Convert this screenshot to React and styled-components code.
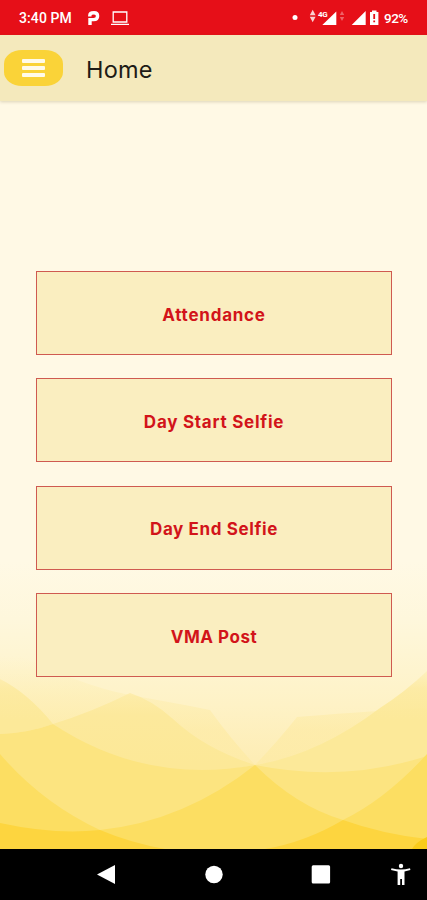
import React from "react";
import styled, { createGlobalStyle } from "styled-components";

const MENU = [
  { label: "Attendance", spacing: 0.76 },
  { label: "Day Start Selfie", spacing: 0.74 },
  { label: "Day End Selfie", spacing: 0.62 },
  { label: "VMA Post", spacing: 0.5 },
];

const Waves = () => (
  <WaveArt viewBox="0 0 427 288">
    <defs>
      <linearGradient id="haze" x1="0" y1="0" x2="0" y2="1">
        <stop offset="0" stopColor="#fff9e5" />
        <stop offset="0.2" stopColor="#fef7dc" />
        <stop offset="0.5" stopColor="#fef2c6" />
        <stop offset="0.72" stopColor="#fdecb2" />
      </linearGradient>
      <linearGradient id="pale" x1="0" y1="95" x2="0" y2="170" gradientUnits="userSpaceOnUse">
        <stop offset="0" stopColor="#fdefb4" stopOpacity="0" />
        <stop offset="0.5" stopColor="#fdedac" stopOpacity="0.7" />
        <stop offset="1" stopColor="#fdeaa2" />
      </linearGradient>
      <linearGradient id="mid" x1="0" y1="120" x2="0" y2="205" gradientUnits="userSpaceOnUse">
        <stop offset="0" stopColor="#fdeba4" stopOpacity="0.5" />
        <stop offset="0.4" stopColor="#fce99c" />
        <stop offset="1" stopColor="#fce897" />
      </linearGradient>
      <linearGradient id="side" x1="0" y1="95" x2="0" y2="160" gradientUnits="userSpaceOnUse">
        <stop offset="0" stopColor="#fdeba6" stopOpacity="0" />
        <stop offset="0.5" stopColor="#fce99c" stopOpacity="0.8" />
        <stop offset="1" stopColor="#fce999" />
      </linearGradient>
    </defs>
    <rect width="427" height="288" fill="url(#haze)" />
    <path d="M0 85 Q80 125 130 134 T210 149 Q230 177 255 204 L0 210Z" fill="url(#pale)" opacity="0.65" />
    <path d="M255 204 Q278 180 297 156 Q345 152 427 147 V210 H255Z" fill="url(#pale)" opacity="0.65" />
    <path d="M0 118 Q28 132 53 163 Q28 172 0 173Z" fill="url(#side)" />
    <path d="M53 163 Q92 151 130 132 Q152 139 173 158 Q205 188 255 204 L200 214 Q110 206 53 163Z" fill="url(#mid)" />
    <path d="M255 204 Q318 194 380 147 Q405 131 427 110 V220 H265Z" fill="url(#side)" />
    <path d="M0 173 Q28 172 53 163 Q145 224 255 204 Q344 222 427 195 V288 H0Z" fill="#fce480" />
    <path d="M0 193 Q42 242 100 269 Q185 260 255 204 Q296 245 343 259 Q386 238 427 193 V288 H0Z" fill="#fcde62" />
    <path d="M0 262 Q55 274 100 269 Q131 282 165 288 H0Z" fill="#fdd53f" />
    <path d="M265 288 Q306 281 343 259 Q382 273 427 278 V288Z" fill="#fdd53f" />
    <path d="M412 288 Q416 281 427 276 V288Z" fill="#f9cb1a" />
  </WaveArt>
);

const StatusIcons = () => (
  <svg width="90" height="36" viewBox="290 0 90 36" fill="#fff">
    <circle cx="295" cy="17.5" r="2.5" />
    <path d="M309.8 15.2 L312.7 9.8 L315.6 15.2Z M309.8 16.8 H315.6 L312.7 22.2Z" opacity="0.8" />
    <StatusTag x="318" y="16.8">4G</StatusTag>
    <path d="M336.3 11.5 V25 H322.3Z" />
    <path d="M339.8 15 L342 11 L344.2 15Z M339.8 17 H344.2 L342 21Z" opacity="0.35" />
    <path d="M365.7 11 V25 H351.7Z" />
    <path d="M372 12 V10.5 H376.5 V12 H378.4 V25 H370 V12Z" />
    <path d="M373.3 14 H375.1 V19 H373.3Z M373.3 20.4 H375.1 V22.2 H373.3Z" fill="#e60f18" />
  </svg>
);

export default function App() {
  return (
    <Screen>
      <GlobalStyle />

      <StatusBar>
        <Clock>3:40 PM</Clock>
        <svg width="45" height="36" viewBox="86 0 45 36" fill="none" stroke="#fff">
          <path d="M90 25 V18 M89.8 16.4 V15.5 Q89.8 12.8 94 12.8 Q97.6 12.8 97.6 16 Q97.6 19.6 93.6 19.6 H90" strokeWidth="3.4" />
          <path d="M113.2 12 H126.8 V22 H113.2Z M111 24.3 H129" strokeWidth="1.3" />
        </svg>
        <StatusRight>
          <StatusIcons />
          <Battery>92%</Battery>
        </StatusRight>
      </StatusBar>

      <AppBar>
        <MenuButton aria-label="Menu">
          <MenuLine />
          <MenuLine />
          <MenuLine />
        </MenuButton>
        <Title>Home</Title>
      </AppBar>

      <Content>
        <Waves />
        <MenuList>
          {MENU.map((item) => (
            <MenuItem key={item.label} $spacing={item.spacing}>
              {item.label}
            </MenuItem>
          ))}
        </MenuList>
      </Content>

      <NavBar>
        <svg width="427" height="51" viewBox="0 849 427 51" fill="#fff">
          <path d="M97 874.5 L115 865 V884Z" />
          <circle cx="214" cy="874.5" r="8.7" />
          <rect x="311.7" y="865.2" width="18.4" height="18.4" rx="1.5" />
          <circle cx="401" cy="866" r="2.2" />
          <path d="M391.5 868.2 Q401 870.7 410 868.2 L410.4 870.1 L404.5 871.5 V885 H402 V879 H400.2 V885 H397.6 V871.5 L391 870.1Z" />
        </svg>
      </NavBar>
    </Screen>
  );
}

// --- Styled Components ---

const GlobalStyle = createGlobalStyle`
  * {
    box-sizing: border-box;
  }
  body {
    margin: 0;
    background: #000;
  }
`;

const Screen = styled.div`
  display: flex;
  flex-direction: column;
  width: 427px;
  height: 900px;
  overflow: hidden;
  background: #fff9e5;
  font-family: Inter, "Liberation Sans", sans-serif;
`;

const StatusBar = styled.header`
  display: flex;
  align-items: center;
  height: 35px;
  flex-shrink: 0;
  padding-left: 19px;
  background: #e60f18;
  color: #fff;
  font-family: Roboto, sans-serif;
  font-weight: 500;

  svg {
    display: block;
    flex-shrink: 0;
  }
`;

const Clock = styled.span`
  width: 67px;
  padding-top: 1px;
  font-size: 14px;
  letter-spacing: 0.1px;
  white-space: nowrap;
`;

const StatusRight = styled.div`
  display: flex;
  align-items: center;
  margin-left: auto;
  padding-right: 17px;
`;

const Battery = styled.span`
  width: 26px;
  margin-left: 4px;
  padding-top: 1px;
  font-size: 13.5px;
  letter-spacing: -0.5px;
`;

const StatusTag = styled.text`
  font: 700 8px Roboto, sans-serif;
  letter-spacing: -0.4px;
`;

const AppBar = styled.div`
  display: flex;
  align-items: center;
  height: 66px;
  flex-shrink: 0;
  padding-left: 4px;
  background: #f4e9bc;
  box-shadow: 0 1px 3px rgba(120, 105, 50, 0.25);
  z-index: 1;
`;

const MenuButton = styled.button`
  display: flex;
  flex-direction: column;
  align-items: center;
  justify-content: center;
  gap: 3px;
  width: 59px;
  height: 36px;
  padding: 0;
  border: none;
  border-radius: 18px / 14px;
  background: #fad338;
`;

const MenuLine = styled.span`
  width: 23px;
  height: 4px;
  border-radius: 1px;
  background: #fffbea;
`;

const Title = styled.h1`
  margin: 2px 0 0 23px;
  color: #1d1b16;
  font-size: 23.5px;
  font-weight: 400;
  letter-spacing: 0.2px;
`;

const Content = styled.main`
  position: relative;
  flex: 1;
  padding: 170px 35px 0 36px;
`;

const WaveArt = styled.svg`
  position: absolute;
  left: 0;
  bottom: 0;
  width: 427px;
  height: 288px;
`;

const MenuList = styled.div`
  position: relative;
  display: grid;
  grid-auto-rows: 84px;
  gap: 23.4px;
`;

const MenuItem = styled.button`
  padding: 3px 0 0;
  border: 1px solid #cf5a50;
  background: #faeec0;
  color: #d2141a;
  font-family: inherit;
  font-size: 17px;
  font-weight: 700;
  letter-spacing: ${(props) => props.$spacing}px;
`;

const NavBar = styled.nav`
  height: 51px;
  flex-shrink: 0;
  background: #000;

  svg {
    display: block;
  }
`;
